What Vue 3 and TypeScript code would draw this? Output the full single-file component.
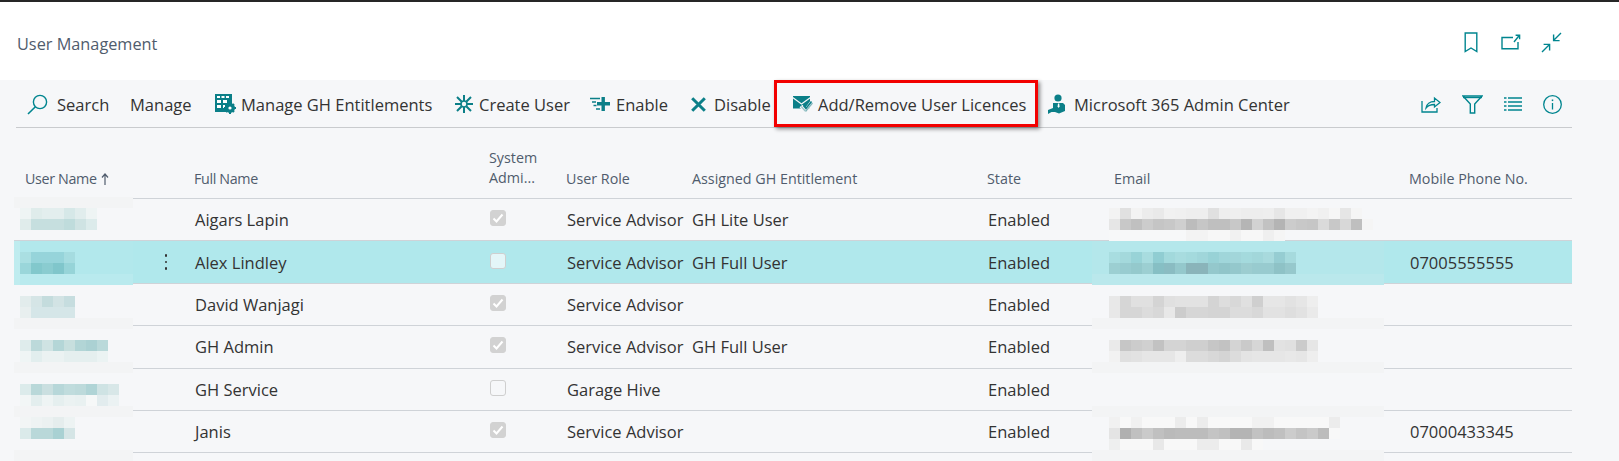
<script setup lang="ts">
interface Row { name: string; checked: boolean; role: string; ent: string; phone: string; selected?: boolean }
const rows: Row[] = [
  { name: 'Aigars Lapin', checked: true, role: 'Service Advisor', ent: 'GH Lite User', phone: '' },
  { name: 'Alex Lindley', checked: false, role: 'Service Advisor', ent: 'GH Full User', phone: '07005555555', selected: true },
  { name: 'David Wanjagi', checked: true, role: 'Service Advisor', ent: '', phone: '' },
  { name: 'GH Admin', checked: true, role: 'Service Advisor', ent: 'GH Full User', phone: '' },
  { name: 'GH Service', checked: false, role: 'Garage Hive', ent: '', phone: '' },
  { name: 'Janis', checked: true, role: 'Service Advisor', ent: '', phone: '07000433345' },
]

interface Band { x: number; y: number; w: number; h: number; c: string }
const bands: Band[] = [
  { x: 14, y: 197, w: 119, h: 11, c: '#f3f4f5' },
  { x: 14, y: 241, w: 119, h: 44, c: '#bfecef' },
  { x: 20, y: 241, w: 113, h: 44, c: '#b2e8ec' },
  { x: 20, y: 274, w: 113, h: 11, c: '#b9eaee' },
  { x: 14, y: 318, w: 119, h: 11, c: '#f3f4f5' },
  { x: 14, y: 362, w: 119, h: 11, c: '#f3f4f5' },
  { x: 14, y: 406, w: 119, h: 11, c: '#f3f4f5' },
  { x: 14, y: 450, w: 119, h: 11, c: '#f3f4f5' },
  { x: 1092, y: 241, w: 292, h: 33, c: '#b4e7eb' },
  { x: 1092, y: 274, w: 292, h: 11, c: '#bae8ec' },
  { x: 1092, y: 318, w: 292, h: 11, c: '#f3f4f5' },
  { x: 1092, y: 362, w: 292, h: 11, c: '#f3f4f5' },
  { x: 1092, y: 406, w: 292, h: 11, c: '#f3f4f5' },
  { x: 1092, y: 450, w: 292, h: 11, c: '#f3f4f5' },
]

interface Patch { x: number; y: number; rows: string[] }
const patches: Patch[] = [
  { x: 20, y: 208, rows: ['eef4f4 dfeceb e3eeee e3eeee d6e8e8 e1eded eef4f4', 'e0eceb c6dfdf c6dfdf c6dfdf bfdcdc cfe3e3 dcebeb'] },
  { x: 20, y: 252, rows: ['aadfe2 96d4da 96d4da 96d4da a5dce0', '9ad6da 82c8cc 8accd0 80c6cb 96d4d8'] },
  { x: 20, y: 296, rows: ['e2ecec d5e5e6 c4dcdd d2e3e4 c6dddf', 'e8efef d5e6e8 d5e6e8 d5e6e8 d5e6e8'] },
  { x: 20, y: 340, rows: ['dfecec bcd9da cfe3e3 b4d6d7 c7dfde b2d5d6 abd1d3 bad9da', 'eff5f5 e2eeee ebf2f2 ebf2f2 e5efef e5efef e5efef ebf3f3'] },
  { x: 20, y: 384, rows: ['dcebeb b9d8d9 cadfe0 b7d7d9 c0dcdd bddadb b0d4d6 cfe3e4 d8e7e8', 'f2f6f6 e3eeee eef4f4 e5efef ebf2f2 e9f1f1 f6f8f8 e2ecee ebf2f3'] },
  { x: 20, y: 417, rows: ['f2f5f5 eef3f3 ebf1f1 e5eded edf3f3', 'dbeaea b9d8d9 b9d8d9 a9d1d3 d5e5e6'] },
  { x: 1109, y: 208, rows: [
    'f3f3f3 e0e0e0 f3f3f3 ececec e9e9e9 f1f1f1 f0f0f0 eeeeee eeeeee e0e0e0 eeeeee efefef ededed ededed eeeeee e6e6e6 f0f0f0 f0f0f0 f3f3f3 f0f0f0 f6f6f6 e6e6e6 f5f5f5',
    'e6e6e6 c8c8c8 c0c0c0 cccccc c5c5c5 c8c8c8 cfcfcf bcbcbc c6c6c6 bfbfbf bfbfbf c8c8c8 b5b5b5 d2d2d2 c2c2c2 b4b4b4 cccccc c8c8c8 c6c6c6 dadada c8c8c8 d8d8d8 bfbfbf f5f5f5',
    'f7f8f9 f7f8f9 f7f8f9 f7f8f9 f7f8f9 f7f8f9 f7f8f9 f3f3f3 f3f3f3 f7f7f7 f7f7f7 f1f1f1 f7f7f7 f7f7f7 efefef f5f5f5',
  ] },
  { x: 1109, y: 252, rows: [
    'a8dde0 a4d9dc 98d3d7 a8dcdf 90cdd2 a2d9dc a8dcdf a4dadd a0d6da 98d2d6 a0d6da a2d6da a4dadd a2d7da a8dadd 96cdd2 a6dadd',
    '9ccfd2 98ccd0 94c9cc 9ccfd2 86bfc4 8abcc2 94c8cc 8ab4ba 8ab4ba 94c8cc 90c5c9 94c8cc 9ccdd0 98cbcf 98cbcf 8ec2c6 96c8cc',
  ] },
  { x: 1109, y: 296, rows: [
    'e8e8e8 d6d6d6 e0e0e0 e0e0e0 d4d4d4 e0e0e0 e2e2e2 e2e2e2 e2e2e2 d4d4d4 dddddd d8d8d8 e0e0e0 cfcfcf e6e6e6 e6e6e6 e2e2e2 e6e6e6 eeeeee',
    'e8e8e8 d6d6d6 d6d6d6 dcdcdc d8d8d8 e8e8e8 cccccc d6d6d6 d6d6d6 d4d4d4 d4d4d4 dcdcdc dcdcdc d8d8d8 e2e2e2 e2e2e2 dedede e2e2e2 eaeaea',
  ] },
  { x: 1109, y: 340, rows: [
    'eaeaea c6c6c6 cccccc d0d0d0 c2c2c2 d4d4d4 d4d4d4 cfcfcf cfcfcf c6c6c6 c2c2c2 d4d4d4 cacaca d6d6d6 bfbfbf e2e2e2 e0e0e0 cbcbcb e6e6e6',
    'f2f2f2 e0e0e0 e2e2e2 e6e6e6 e6e6e6 e6e6e6 eeeeee dcdcdc dcdcdc d8d8d8 d4d4d4 dcdcdc e4e4e4 e6e6e6 e6e6e6 e6e6e6 e8e8e8 e6e6e6 eeeeee',
  ] },
  { x: 1109, y: 417, rows: [
    'f1f1f1 f8f8f8 f1f1f1 f8f8f8 f8f8f8 f8f8f8 ececec f8f8f8 ececec f8f8f8 f8f8f8 f8f8f8 f8f8f8 f1f1f1 f1f1f1 f8f8f8 f8f8f8 f8f8f8 f8f8f8 f8f8f8 ececec',
    'e4e4e4 b0b0b0 c0c0c0 cacaca c0c0c0 bababa bcbcbc bcbcbc bcbcbc c4c4c4 c0c0c0 b4b4b4 b4b4b4 c2c2c2 bcbcbc c0c0c0 cccccc c4c4c4 cacaca bcbcbc f8f8f8',
    'eeefef f8f8f8 f8f8f8 f8f8f8 e8e8e8 f8f8f8 f8f8f8 f8f8f8 ececec ececec f8f8f8 f8f8f8 e9e9e9 f8f8f8',
  ] },
]
const cells = (r: string) => r.split(' ').map((c) => '#' + c)
</script>

<template>
  <div class="page">
    <div class="topline"></div>
    <header class="head">
      <span class="title">User Management</span>
      <div class="head-icons">
        <svg class="ic-book" width="14" height="21" viewBox="0 0 14 21" fill="none" stroke="#00858f" stroke-width="1.4"><path d="M1.200 1h11.600v18.600L7 16l-5.800 3.600z"/></svg>
        <svg class="ic-open" width="20" height="16" viewBox="0 0 20 16" fill="none" stroke="#00858f" stroke-width="1.4"><path d="M12 3.500H1v11.300h16V8"/><path d="M13 8l5-6.200M14.600 1.200h4v4"/></svg>
        <svg width="21" height="21" viewBox="0 0 21 21" fill="none" stroke="#00858f" stroke-width="1.4"><path d="M20 1l-7 7M12.600 2.600v6h6M1 20l7-7M2.600 12.400h6v6"/></svg>
      </div>
    </header>

    <main class="body">
      <nav class="toolbar">
        <span class="tool t-search">
          <svg width="21" height="21" viewBox="0 0 21 21" fill="none" stroke="#00858f" stroke-width="1.4"><circle cx="13" cy="8" r="6.600"/><path d="M8.400 12.800L1 20" stroke-width="1.600"/></svg>
          <span>Search</span>
        </span>
        <span class="tool t-manage"><span>Manage</span></span>
        <span class="tool t-ent">
          <svg width="21" height="20" viewBox="0 0 21 20"><path fill="#0b7f88" d="M0 0h17v11.500l-5 6.500H0z"/><path fill="#fff" d="M2 2h3v2H2zM6.500 2h3v2h-3zM11 2h3v2h-3zM2 6h4v3H2zM2 11h4v3H2zM8 6h4v3H8zM8 11h2v3H8z"/><circle cx="15" cy="14" r="5" fill="#0b7f88"/><path stroke="#0b7f88" stroke-width="2" d="M15 8v12M9 14h12M11 10l8 8M19 10l-8 8"/><circle cx="15" cy="14" r="1.600" fill="#fff"/></svg>
          <span>Manage GH Entitlements</span>
        </span>
        <span class="tool t-create">
          <svg width="18" height="18" viewBox="0 0 18 18" fill="none" stroke="#0b7f88"><path stroke-width="2" d="M9 0v6M9 12v6M0 9h6M12 9h6M2 2l4.500 4.500M11.500 11.500L16 16M16 2l-4.500 4.500M6.500 11.500L2 16"/><circle cx="9" cy="9" r="3" stroke-width="1.600"/></svg>
          <span>Create User</span>
        </span>
        <span class="tool t-enable">
          <svg width="20" height="14" viewBox="0 0 20 14"><path fill="#0b7f88" d="M11.500 0h3.400v5H20v3.400h-5.100V14h-3.400V8.400H7V5h4.500z"/><path stroke="#0b7f88" stroke-width="1.300" d="M0 1.500h10M2 5h4M3.500 8.500h3M6 12h4"/></svg>
          <span>Enable</span>
        </span>
        <span class="tool t-disable">
          <svg width="15" height="15" viewBox="0 0 15 15"><path stroke="#0b7f88" stroke-width="3" d="M1.200 1.200l12.600 12.600M13.800 1.200L1.200 13.800"/></svg>
          <span>Disable</span>
        </span>
        <span class="tool t-licence">
          <svg width="20" height="17" viewBox="0 0 20 17"><path fill="#0b7f88" d="M0 0h17v12.500H0z"/><path fill="none" stroke="#f6f7f9" stroke-width="1.200" d="M-.5 1.500l9 6.500 9-6.500"/><path fill="none" stroke="#f6f7f9" stroke-width="4" d="M8 10l4.500 5L19 6"/><path fill="none" stroke="#9cc5c9" stroke-width="1.300" d="M8.200 10.500l4 4.500"/><path fill="none" stroke="#0b7f88" stroke-width="1.600" d="M10.500 9.500l2.500 3L18.500 5.500"/><path fill="none" stroke="#7fb5ba" stroke-width="1.200" d="M12.500 15.500L19.500 7"/></svg>
          <span>Add/Remove User Licences</span>
        </span>
        <span class="tool t-ms">
          <svg width="18" height="21" viewBox="0 0 18 21"><circle cx="10" cy="4" r="3.600" fill="#0b7f88"/><path fill="#0b7f88" d="M5 9h10l2 2v6l-6 2.500-4-1.500H3.500L0 20v-4l5-2z"/><path fill="#fff" d="M10 9.500h1.200l.4 3-1 1.500-1-1.500z"/></svg>
          <span>Microsoft 365 Admin Center</span>
        </span>
        <div class="tool-right">
          <svg width="20" height="18" viewBox="0 0 20 18" fill="none" stroke="#00858f" stroke-width="1.300"><path d="M1 6v11h15v-4"/><path d="M5 13c.5-4 4-6.500 8.500-6.500V3l5.500 4.500-5.500 4.500V9.500C10 9.500 7 10.500 5 13z"/></svg>
          <svg width="21" height="19" viewBox="0 0 21 19" fill="none" stroke="#00858f" stroke-width="1.400"><path d="M1 1h19l-7.300 8v9H8.300V9z"/><path d="M1 2.500h19"/></svg>
          <svg width="18" height="14" viewBox="0 0 18 14" fill="none" stroke="#00858f" stroke-width="1.300"><path d="M0 1h2.500M4 1h14M0 5h2.500M4 5h14M0 9h2.500M4 9h14M0 13h2.500M4 13h14"/></svg>
          <svg width="19" height="19" viewBox="0 0 19 19" fill="none" stroke="#00858f" stroke-width="1.300"><circle cx="9.500" cy="9.500" r="8.800"/><path d="M9.500 8v6.500"/><path d="M9.500 4.500v1.600" stroke-width="1.500"/></svg>
        </div>
      </nav>

      <div class="table">
        <div class="grid thead">
          <span class="user-h"><span class="tight">User Name</span>
            <svg width="8" height="12" viewBox="0 0 8 12" fill="none" stroke="#505c6d" stroke-width="1.200"><path d="M4 12V1M1 4.500L4 1l3 3.500"/></svg>
          </span>
          <span class="tight">Full Name</span>
          <span class="sys">System<br>Admi...</span>
          <span>User Role</span>
          <span>Assigned GH Entitlement</span>
          <span>State</span>
          <span>Email</span>
          <span>Mobile Phone No.</span>
        </div>
        <div v-for="r in rows" :key="r.name" class="grid trow" :class="{ sel: r.selected }">
          <span class="dots"><i v-if="r.selected"></i><i v-if="r.selected"></i><i v-if="r.selected"></i></span>
          <span class="cell">{{ r.name }}</span>
          <span class="box" :class="{ on: r.checked }">
            <svg v-if="r.checked" width="12" height="12" viewBox="0 0 12 12" fill="none" stroke="#fff" stroke-width="2"><path d="M1.500 6.500l3 3 6-7"/></svg>
          </span>
          <span class="cell">{{ r.role }}</span>
          <span>{{ r.ent }}</span>
          <span class="cell">Enabled</span>
          <span></span>
          <span class="cell">{{ r.phone }}</span>
        </div>
      </div>
    </main>

    <div class="redbox"></div>

    <div class="band" v-for="b in bands" :key="`${b.x}-${b.y}-${b.h}`"
      :style="{ left: b.x + 'px', top: b.y + 'px', width: b.w + 'px', height: b.h + 'px', background: b.c }"></div>
    <div class="mosaic" v-for="p in patches" :key="`${p.x}-${p.y}`" :style="{ left: p.x + 'px', top: p.y + 'px' }">
      <div class="mrow" v-for="(row, i) in p.rows" :key="i">
        <i v-for="(c, j) in cells(row)" :key="j" :style="{ background: c }"></i>
      </div>
    </div>
  </div>
</template>

<style>
html, body { margin: 0; background: #f5f6f8; overflow: hidden; }
</style>

<style scoped>
.page {
  position: relative;
  width: 1619px;
  height: 461px;
  overflow: hidden;
  background: #f6f7f9;
  font-family: "Open Sans", "Noto Sans", sans-serif;
  color: #2b2b2b;
}
.topline { height: 2px; background: #262626; }
.head {
  height: 78px;
  background: #fff;
  display: flex;
  align-items: center;
  justify-content: space-between;
  padding: 0 57px 0 17px;
  box-sizing: border-box;
}
.title { font-size: 16.300px; color: #505c6d; margin-top: 5px; }
.head-icons { display: flex; align-items: center; padding-top: 2px; }
.ic-book { margin-right: 23px; }
.ic-open { margin-right: 20px; }
.toolbar {
  height: 46px;
  padding: 1px 0 0 11px;
  margin: 0 47px 0 16px;
  border-bottom: 1px solid #c9cbce;
  display: flex;
  align-items: center;
}
.tool {
  display: flex;
  align-items: center;
  gap: 6px;
  font-size: 16.500px;
  white-space: nowrap;
  color: #333;
}
.t-search { width: 103px; gap: 9px; }
.t-manage { width: 85px; }
.t-ent { width: 240px; gap: 5px; }
.t-create { width: 135px; }
.t-enable { width: 101px; }
.t-disable { width: 102px; gap: 8px; }
.t-licence { width: 255px; gap: 5px; }
.t-ms { gap: 8px; }
.tool-right { margin-left: auto; display: flex; align-items: center; gap: 21px; padding-right: 10px; }
.table { margin-left: 14px; width: 1558px; }
.grid {
  display: grid;
  grid-template-columns: 180px 295px 77px 126px 295px 127px 295px 163px;
  align-items: center;
}
.grid > span { white-space: nowrap; }
.thead {
  height: 71px;
  align-items: end;
  padding-bottom: 10px;
  box-sizing: border-box;
  border-bottom: 1px solid #cfd3d8;
  font-size: 14.300px;
  color: #505c6d;
}
.tight { letter-spacing: -0.350px; }
.user-h { padding-left: 11px; display: flex; align-items: center; gap: 4px; }
.sys { line-height: 20px; }
.trow {
  height: 42.400px;
  box-sizing: border-box;
  border-bottom: 1px solid #cfd3d8;
  font-size: 16.500px;
  color: #333;
}
.cell { padding-left: 1px; }
.trow.sel { background: #b0e8ec; }
.trow.sel .box { background: #e4f6f8; }
.dots { display: flex; flex-direction: column; align-items: center; gap: 4px; width: 6px; margin-left: 149px; }
.dots i { display: block; width: 2.500px; height: 2.500px; border-radius: 50%; background: #333; }
.box {
  width: 16px;
  height: 16px;
  margin-left: 1px;
  margin-top: -3px;
  box-sizing: border-box;
  border: 1.500px solid #cfcfcf;
  border-radius: 3px;
  display: flex;
  align-items: center;
  justify-content: center;
}
.box.on { background: #d2d2d2; border-color: #d2d2d2; }
.redbox {
  position: absolute;
  left: 774px;
  top: 80px;
  width: 264px;
  height: 47px;
  box-sizing: border-box;
  border: 3px solid #f20000;
  box-shadow: 2px 2px 4px rgba(0, 0, 0, 0.45);
}
.band, .mosaic { position: absolute; }
.mrow { display: flex; height: 11px; }
.mrow i { display: block; width: 11px; height: 11px; flex: none; }
</style>
